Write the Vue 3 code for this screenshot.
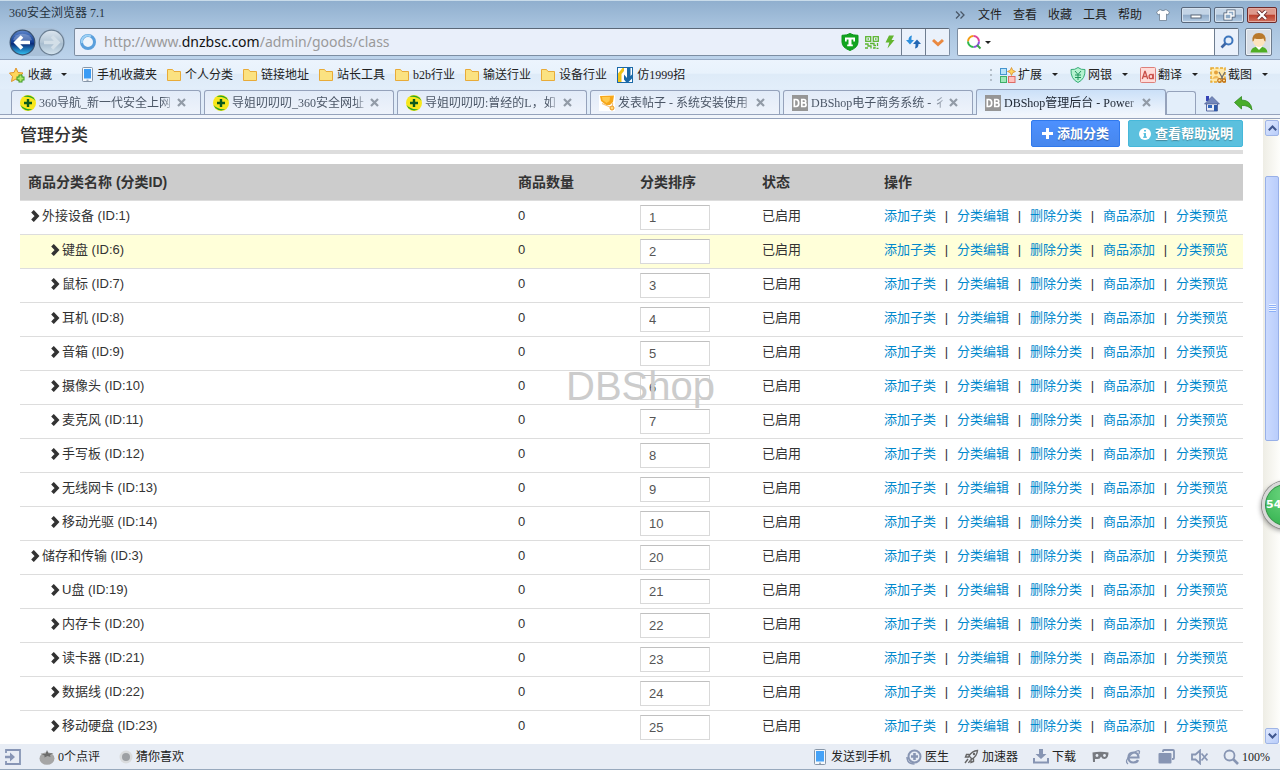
<script setup>
import { ref } from 'vue'

const menus = ['文件', '查看', '收藏', '工具', '帮助']
const folders = ['个人分类', '链接地址', '站长工具', 'b2b行业', '输送行业', '设备行业']
const tools = [
  { icon: 'ext', label: '扩展' },
  { icon: 'bank', label: '网银' },
  { icon: 'trans', label: '翻译' },
  { icon: 'shot', label: '截图' }
]
const tabs = [
  { icon: 'plus', title: '360导航_新一代安全上网' },
  { icon: 'plus', title: '导姐叨叨叨_360安全网址' },
  { icon: 'plus', title: '导姐叨叨叨:曾经的L，如' },
  { icon: 'medal', title: '发表帖子 - 系统安装使用' },
  { icon: 'db', title: 'DBShop电子商务系统 - 彳' },
  { icon: 'db', title: 'DBShop管理后台 - Power', active: true }
]
const rows = ref([
  { name: '外接设备', id: 1, sort: '1', top: true },
  { name: '键盘', id: 6, sort: '2', hot: true },
  { name: '鼠标', id: 7, sort: '3' },
  { name: '耳机', id: 8, sort: '4' },
  { name: '音箱', id: 9, sort: '5' },
  { name: '摄像头', id: 10, sort: '6' },
  { name: '麦克风', id: 11, sort: '7' },
  { name: '手写板', id: 12, sort: '8' },
  { name: '无线网卡', id: 13, sort: '9' },
  { name: '移动光驱', id: 14, sort: '10' },
  { name: '储存和传输', id: 3, sort: '20', top: true },
  { name: 'U盘', id: 19, sort: '21' },
  { name: '内存卡', id: 20, sort: '22' },
  { name: '读卡器', id: 21, sort: '23' },
  { name: '数据线', id: 22, sort: '24' },
  { name: '移动硬盘', id: 23, sort: '25' }
])
const actions = ['添加子类', '分类编辑', '删除分类', '商品添加', '分类预览']
const query = ref('')
</script>

<template>
  <div class="browser">
    <header class="frame">
      <div class="title-row">
        <span class="app-name">360安全浏览器 7.1</span>
        <nav class="menus">
          <button class="plain more" aria-label="更多">
            <svg width="10" height="8" viewBox="0 0 10 8"><path d="M1 0.5l3.5 3.5L1 7.5M5.5 0.5L9 4 5.5 7.5" fill="none" stroke="#4a5868" stroke-width="1.3" /></svg>
          </button>
          <button v-for="m in menus" :key="m" class="plain">{{ m }}</button>
          <button class="plain skin" aria-label="皮肤">
            <svg width="14" height="12" viewBox="0 0 14 12"><path d="M4 0.5Q7 3 10 0.5L13.5 3 12 6 10.5 5V11.5h-7V5L2 6 0.5 3Z" fill="#fff" stroke="#6d7f92" stroke-width="0.8" /></svg>
          </button>
        </nav>
        <div class="win-buttons">
          <button aria-label="最小化">
            <svg width="12" height="10" viewBox="0 0 12 10"><rect x="1" y="5" width="10" height="3" fill="#fff" stroke="#5d6878" /></svg>
          </button>
          <button aria-label="还原">
            <svg width="13" height="12" viewBox="0 0 13 12"><g fill="none" stroke="#4f5d70" stroke-width="3"><rect x="5" y="2" width="6" height="5" /><rect x="2" y="5" width="6" height="5" /></g><g fill="#8ca8c4" stroke="#fff" stroke-width="1.4"><rect x="5" y="2" width="6" height="5" /><rect x="2" y="5" width="6" height="5" /></g></svg>
          </button>
          <button class="close" aria-label="关闭">
            <svg width="12" height="10" viewBox="0 0 12 10"><path d="M2 1l8 8M10 1l-8 8" stroke="#6d2d2d" stroke-width="4" /><path d="M2 1l8 8M10 1l-8 8" stroke="#fff" stroke-width="2.3" /></svg>
          </button>
        </div>
      </div>

      <div class="address-row">
        <div class="history">
          <button class="plain" aria-label="后退">
            <svg width="27" height="27" viewBox="0 0 27 27">
              <defs><linearGradient id="back" x1="0" y1="0" x2="0" y2="1"><stop offset="0" stop-color="#5d86cc" /><stop offset=".48" stop-color="#123e94" /><stop offset=".55" stop-color="#0a2b78" /><stop offset="1" stop-color="#35c4f4" /></linearGradient></defs>
              <circle cx="13.5" cy="13.5" r="12.3" fill="url(#back)" stroke="#38516f" stroke-width="1.2" />
              <path d="M4 11a10 9 0 0 1 19 0Q13 14 4 11Z" fill="#fff" opacity=".25" />
              <path d="M13 7.500l-6 6 6 6M7.500 13.500h13.500" fill="none" stroke="#fff" stroke-width="3.6" />
            </svg>
          </button>
          <button class="plain" aria-label="前进">
            <svg width="27" height="27" viewBox="0 0 27 27">
              <defs><linearGradient id="fwd" x1="0" y1="0" x2="0" y2="1"><stop offset="0" stop-color="#dce6ef" /><stop offset=".48" stop-color="#b5c7d6" /><stop offset=".55" stop-color="#a8bdcf" /><stop offset="1" stop-color="#d5e5f0" /></linearGradient></defs>
              <circle cx="13.5" cy="13.5" r="12.3" fill="url(#fwd)" stroke="#6b7f93" stroke-width="1.2" />
              <path d="M14 7.500l6 6-6 6M19.500 13.500H6" fill="none" stroke="#d3dfe8" stroke-width="3.4" />
            </svg>
          </button>
        </div>

        <div class="address">
          <svg class="site" width="18" height="18" viewBox="0 0 18 18"><circle cx="9" cy="9" r="6.5" fill="#eef4fb" stroke="#5a9fdc" stroke-width="3" /><path d="M3 10a6 6 0 0 1 9-6.500" fill="none" stroke="#9fd2f5" stroke-width="2" /></svg>
          <a class="url" href="#">http://www.<b>dnzbsc.com</b>/admin/goods/class</a>
          <span class="marks">
            <svg width="18" height="18" viewBox="0 0 18 18"><path d="M9 0.5Q12 2.5 17 2.3V9Q17 14.5 9 17.5 1 14.5 1 9V2.3Q6 2.5 9 .5Z" fill="#11a51f" stroke="#0a9518" /><path d="M4 4.500h10v4h-1.700V6.500H10.500V11.500h1.300v1.800H6.200V11.500h1.300V6.500H5.700V8.500H4Z" fill="#fff" /></svg>
            <svg width="14" height="13" viewBox="0 0 14 13"><g fill="none" stroke="#5cb531" stroke-width="1.3"><rect x=".7" y=".7" width="5" height="4.600" /><rect x="8.300" y=".7" width="5" height="4.600" /><path d="M0 8h3v2h3v2.500M0 12h3M5 7.500h4v2h2M8 12h2v-1M12.500 7v3M11.500 12.300h2M2.500 3h1.500M10 3h1.500" /></g></svg>
            <svg width="10" height="14" viewBox="0 0 10 14"><path d="M4 0.500h5L6.500 5H9.500L2.500 13.500 4.300 7.500H0.500Z" fill="#62b52f" /></svg>
          </span>
          <button class="cell" aria-label="刷新">
            <svg width="15" height="14" viewBox="0 0 15 14"><path d="M6 0.500Q2.500 1 2.500 5H0L4 9.500 8 5H5.500Q5.300 2.500 6 .5Z" fill="#2d8fdd" /><path d="M9 13.500Q12.500 13 12.500 9H15L11 4.500 7 9H9.500Q9.700 11.500 9 13.500Z" fill="#2368b4" /></svg>
          </button>
          <button class="cell" aria-label="展开">
            <svg width="12" height="9" viewBox="0 0 12 9"><path d="M1 2l5 4.500L11 2" fill="none" stroke="#ea8940" stroke-width="3" /></svg>
          </button>
        </div>

        <div class="search">
          <svg width="16" height="16" viewBox="0 0 16 16"><g fill="none" stroke-width="2"><path d="M2 7.500A5.500 5.500 0 0 1 7.500 2" stroke="#f39c12" /><path d="M7.500 2A5.500 5.500 0 0 1 13 7.500" stroke="#e0449a" /><path d="M13 7.500A5.500 5.500 0 0 1 7.500 13" stroke="#8f4de0" /><path d="M7.500 13A5.500 5.500 0 0 1 2 7.500" stroke="#2fb84c" /><path d="M11 11l3.500 3.500" stroke="#3ba84a" /></g></svg>
          <i class="caret"></i>
          <input v-model="query" type="text" aria-label="搜索" />
          <button class="cell" aria-label="搜索">
            <svg width="14" height="14" viewBox="0 0 14 14"><circle cx="8.500" cy="5.500" r="4" fill="#e6effb" stroke="#3d76bd" stroke-width="2" /><path d="M5.500 8.500L1.500 12.500" stroke="#3d66a5" stroke-width="2.600" /></svg>
          </button>
        </div>
        <button class="avatar" aria-label="用户">
          <svg width="20" height="21" viewBox="0 0 20 21"><path d="M1.500 20.500Q2 14.500 10 14.500t8.500 6Z" fill="#4fae25" /><path d="M7 15l3 3 3-3v-2H7Z" fill="#fff" /><ellipse cx="10" cy="8.500" rx="6" ry="6.500" fill="#fde3bd" /><path d="M3.500 9.500Q2.500 1 10 1t6.500 8.500Q15 9 14.500 6.500 10 7.500 5.500 6.500 5 9 3.500 9.500Z" fill="#b9782a" /></svg>
        </button>
      </div>
    </header>

    <div class="bookmarks">
      <div class="marks-left">
        <button class="plain fav">
          <svg width="16" height="16" viewBox="0 0 16 16"><path d="M7 1l2 4.500 5 .5-3.500 3.500 1 5L7 12l-4.500 2.500 1-5L.5 6l4.500-.5Z" fill="#ffd75a" stroke="#e0952c" /><path d="M11.500 7.500v8M7.500 11.500h8" stroke="#3d9b22" stroke-width="4" /><path d="M11.500 8.500v6M8.500 11.500h6" stroke="#b0e86e" stroke-width="2" /></svg>
          <span>收藏</span><i class="caret"></i>
        </button>
        <a href="#" class="mark">
          <svg width="11" height="15" viewBox="0 0 11 15"><rect x=".5" y=".5" width="10" height="14" rx="1" fill="#f5f8fb" stroke="#8796a8" /><rect x="2" y="2" width="7" height="9.500" fill="#3b9cf5" /><path d="M4.500 13.200h2" stroke="#7d8da0" /></svg>手机收藏夹
        </a>
        <a v-for="f in folders" :key="f" href="#" class="mark">
          <svg width="14" height="12" viewBox="0 0 14 12"><path d="M.5 11.500V.5h5l1.500 2h6.500v9Z" fill="#fbe281" stroke="#e8ab38" /></svg>{{ f }}
        </a>
        <a href="#" class="mark">
          <svg width="16" height="16" viewBox="0 0 16 16"><rect x=".5" y=".5" width="15" height="15" fill="#fff" stroke="#1a69a8" /><path d="M1 6.500L5.500 1H7v3L4.500 7v8H1Z" fill="#f0c419" /><path d="M7 7.500l3 3.500V1h3.500v8L15 7.500v4L11.500 15H9L7 12.500Z" fill="#1a69a8" /></svg>仿1999招
        </a>
      </div>
      <div class="tools">
        <i class="dots"></i>
        <button v-for="t in tools" :key="t.icon" class="plain tool">
          <svg width="16" height="16" viewBox="0 0 16 16">
            <g v-if="t.icon === 'ext'"><rect x=".5" y="1.500" width="6" height="6" fill="#b9e4fb" stroke="#4495cf" /><rect x=".5" y="9.500" width="6" height="6" fill="#9ee9b9" stroke="#3fae68" /><rect x="8.500" y="9.500" width="6.500" height="6" fill="#ffc1bd" stroke="#dd6b65" /><path d="M11.500 .5l1.200 2.800 2.800 1.200-2.800 1.200-1.200 2.800-1.200-2.800-2.800-1.200 2.800-1.200Z" fill="#ffd45c" stroke="#d98f2d" stroke-width=".8" /></g>
            <g v-else-if="t.icon === 'bank'"><path d="M8 .5Q11 3 15 2.500 15.500 12 8 15.500.5 12 1 2.500 5 3 8 .5Z" fill="#b5f2d0" stroke="#38ae78" /><path d="M5 4l3 3.500L11 4M8 7.500V13M5 8h6M5 10.500h6" fill="none" stroke="#1f945c" /></g>
            <g v-else-if="t.icon === 'trans'"><rect x=".5" y=".5" width="15" height="15" rx="1" fill="#ffdcd9" stroke="#dd807b" /><path d="M2.300 12L4.800 4.500h.4L7.700 12M3.200 9.500h3.600" fill="none" stroke="#c9504a" stroke-width="1.300" /><ellipse cx="11" cy="9.500" rx="1.900" ry="2.200" fill="none" stroke="#c9504a" stroke-width="1.300" /><path d="M13.200 6.800V12.300" stroke="#c9504a" stroke-width="1.300" /></g>
            <g v-else><rect x="1" y="1" width="14" height="14" fill="#ffe9a8" stroke="#e8a92f" stroke-width="1.500" stroke-dasharray="3 1.500" /><circle cx="6" cy="5.500" r="2" fill="#e6a23c" /><path d="M2 12q4-6 7-1" fill="#efb95c" /><path d="M9 5l4 7M15 5l-4 7" stroke="#707070" stroke-width="1.300" /><circle cx="9.500" cy="13.500" r="1.800" fill="none" stroke="#bd6e1a" stroke-width="1.200" /><circle cx="14" cy="13.500" r="1.600" fill="none" stroke="#bd6e1a" stroke-width="1.200" /></g>
          </svg>
          <span>{{ t.label }}</span><i class="caret"></i>
        </button>
      </div>
    </div>

    <div class="tabs">
      <div v-for="t in tabs" :key="t.title" class="tab" :class="{ active: t.active }">
        <svg width="16" height="16" viewBox="0 0 16 16">
          <g v-if="t.icon === 'plus'"><circle cx="8" cy="8" r="8" fill="#f8e71c" /><path d="M3.500 2A8 8 0 0 1 15.500 6Q11 1 3.500 2ZM12.500 14A8 8 0 0 1 .5 10Q5 15 12.500 14Z" fill="#23a428" /><path d="M8 4v8M4 8h8" stroke="#0b5a1c" stroke-width="2.400" /></g>
          <g v-else-if="t.icon === 'medal'"><rect width="16" height="16" fill="#fff" /><path d="M1 1l14-.5L14 7l-3 3H7L2 6Z" fill="#f7a81b" /><path d="M3 2h8l-.5 4-3 2L3.500 5Z" fill="#ffc94d" /><path d="M3 8.500l8 3.500M13.500 8v3" stroke="#f3c27c" stroke-width="1.200" /><circle cx="13" cy="13" r="2" fill="#ffd97a" stroke="#ec9620" /></g>
          <g v-else><rect width="16" height="16" fill="#969696" /><path d="M2.300 4.500h1.700a2.700 3.500 0 0 1 0 7H2.300ZM9.800 4.500h2.200a1.700 1.700 0 0 1 0 3.400H9.800ZM9.800 8h2.500a1.700 1.700 0 0 1 0 3.500H9.800Z" fill="none" stroke="#fff" stroke-width="1.700" /></g>
        </svg>
        <span class="tab-title">{{ t.title }}</span>
        <button class="plain" aria-label="关闭标签">
          <svg width="9" height="9" viewBox="0 0 9 9"><path d="M1 1l7 7M8 1L1 8" stroke="#929ba7" stroke-width="2.200" /></svg>
        </button>
      </div>
      <button class="new-tab" aria-label="新标签"></button>
      <button class="plain home" aria-label="主页">
        <svg width="16" height="17" viewBox="0 0 16 17"><path d="M2 1h3v5H2Z" fill="#3543b5" /><path d="M2.500 8.500h11V16h-11Z" fill="#e9edf6" stroke="#5a6ca4" /><path d="M8 1.500L.5 9h15Z" fill="#7488bb" stroke="#43558b" stroke-width=".6" /><rect x="4" y="10" width="4" height="3" fill="#3266bb" /><rect x="10" y="10" width="3" height="6" fill="#2d59a8" /></svg>
      </button>
      <button class="plain" aria-label="恢复">
        <svg width="19" height="15" viewBox="0 0 19 15"><path d="M0.500 6.500L7.500 .5V4Q17 4 18 14 14.500 9 7.500 9.500V13Z" fill="#49ad2b" stroke="#31891e" stroke-width=".8" /></svg>
      </button>
    </div>
    <div class="strip"></div>

    <div class="viewport">
      <main class="page">
        <div class="page-head">
          <h1>管理分类</h1>
          <div class="page-buttons">
            <button class="btn add"><svg width="11" height="11" viewBox="0 0 11 11"><path d="M5.500 0v11M0 5.500h11" stroke="#fff" stroke-width="3" /></svg>添加分类</button>
            <button class="btn help"><svg width="12" height="12" viewBox="0 0 12 12"><circle cx="6" cy="6" r="6" fill="#fff" /><path d="M5 2h2v1.500H5ZM4.500 5H7v3.500h.8V10H4.200V8.500H5V6.300h-.5Z" fill="#5bc0de" /></svg>查看帮助说明</button>
          </div>
        </div>

        <table>
          <colgroup><col /><col class="c" /><col class="c" /><col class="c" /><col class="c-actions" /></colgroup>
          <thead>
            <tr><th>商品分类名称 (分类ID)</th><th>商品数量</th><th>分类排序</th><th>状态</th><th>操作</th></tr>
          </thead>
          <tbody>
            <tr v-for="r in rows" :key="r.id" :class="{ hot: r.hot }">
              <td>
                <div class="name" :class="{ child: !r.top }">
                  <svg width="14" height="12" viewBox="0 0 14 12"><path d="M4.500 1.200L9 6 4.500 10.800" fill="none" stroke="#333" stroke-width="3.600" /></svg>{{ r.name }} (ID:{{ r.id }})
                </div>
              </td>
              <td>0</td>
              <td><input v-model="r.sort" type="text" :aria-label="r.name + '排序'" /></td>
              <td>已启用</td>
              <td>
                <div class="actions">
                  <template v-for="(a, i) in actions" :key="a"><span v-if="i" class="sep">|</span><a href="#">{{ a }}</a></template>
                </div>
              </td>
            </tr>
          </tbody>
        </table>
        <div class="watermark">DBShop</div>
      </main>

      <div class="scrollbar">
        <button aria-label="向上滚动"><svg width="9" height="6" viewBox="0 0 9 6"><path d="M.8 5.200l3.700-3.700 3.700 3.700" fill="none" stroke="#40578f" stroke-width="2" /></svg></button>
        <div class="track"><div class="thumb"><i></i></div></div>
        <button aria-label="向下滚动"><svg width="9" height="6" viewBox="0 0 9 6"><path d="M.8 .8l3.700 3.700L8.200 .8" fill="none" stroke="#40578f" stroke-width="2" /></svg></button>
      </div>
      <div class="speed-ball">54</div>
    </div>

    <footer class="status">
      <button class="plain panel" aria-label="侧栏">
        <svg width="16" height="16" viewBox="0 0 16 16"><path d="M1 4V1h14v14H1v-3" fill="none" stroke="#8795b5" stroke-width="1.800" /><path d="M0 6.700h5V3.500L10 8l-5 4.500V9.300H0Z" fill="#8795b5" /></svg>
      </button>
      <button class="plain item"><svg width="16" height="16" viewBox="0 0 16 16"><ellipse cx="8" cy="9.500" rx="7.500" ry="6.300" fill="#a6a6a6" /><path d="M1.500 4.500l5 .5 1.500-4 1.500 3.500 5-.5-3.500 2 .5 2-3-1-3 1.500V6.500Z" fill="#6c6c6c" /></svg>0个点评</button>
      <button class="plain item guess"><svg width="14" height="14" viewBox="0 0 14 14"><circle cx="7" cy="7" r="6.500" fill="#d9dbdd" /><circle cx="7" cy="7" r="4" fill="#9da0a4" /></svg>猜你喜欢</button>
      <div class="status-right">
        <button class="plain item send"><svg width="12" height="16" viewBox="0 0 12 16"><rect x=".5" y=".5" width="11" height="15" rx="1" fill="#f5f8fb" stroke="#8796a8" /><rect x="2" y="2" width="8" height="10.500" fill="#45a2f7" /><path d="M5 14.200h2" stroke="#7d8da0" /></svg>发送到手机</button>
        <button class="plain item"><svg width="16" height="16" viewBox="0 0 16 16"><circle cx="8.500" cy="7.500" r="6" fill="none" stroke="#8795b3" stroke-width="2" /><path d="M8.500 4v7M5 7.500h7" stroke="#8795b3" stroke-width="2.600" /><path d="M1 8Q1 15 8.500 15" fill="none" stroke="#8795b3" stroke-width="1.500" /></svg>医生</button>
        <button class="plain item"><svg width="15" height="15" viewBox="0 0 15 15"><path d="M13.500 1.500Q8 2 5 7L8 10Q13 7 13.500 1.500ZM5.500 5.500H2.500L1.500 8H5M9.500 9.500v3L7 13.500V10M4 10L1 14M6 11.500L4.500 14" fill="none" stroke="#666" stroke-width="1.400" /><circle cx="10" cy="5" r="1.200" fill="#666" /></svg>加速器</button>
        <button class="plain item"><svg width="16" height="15" viewBox="0 0 16 15"><path d="M6 0h4v5h3.500L8 10 2.500 5H6Z" fill="#8795b3" /><path d="M1 9v4.500h14V9" fill="none" stroke="#8795b3" stroke-width="2" /></svg>下载</button>
        <button class="plain glyph" aria-label="无痕"><svg width="17" height="12" viewBox="0 0 17 12"><path d="M.5 1.500Q8 0 16.500 1.500 16.500 8 12.500 8 10 8 9 5.500 8 8.500 5 8H3v3H1Z" fill="#777a80" /><circle cx="5" cy="4.500" r="1.400" fill="#e8edf5" /><circle cx="12.500" cy="4.500" r="1.400" fill="#e8edf5" /></svg></button>
        <button class="plain glyph" aria-label="兼容模式"><svg width="16" height="16" viewBox="0 0 16 16"><path d="M3.500 8.500H13.500Q13.500 3.500 8.500 3.500T3.500 8.500Q3.500 13.500 8.500 13.500 12 13.500 13 11" fill="none" stroke="#8795b3" stroke-width="2.200" /><path d="M3 15Q-1 12 6 5.500 13.500 0 14.500 2.500L14 5" fill="none" stroke="#8795b3" stroke-width="1.300" /></svg></button>
        <button class="plain glyph" aria-label="窗口"><svg width="17" height="15" viewBox="0 0 17 15"><path d="M5 3V2Q5 1 6 1h9q1 0 1 1v7q0 1-1 1h-1" fill="none" stroke="#8795b3" stroke-width="1.800" /><rect x=".5" y="4" width="13" height="10.500" rx="1" fill="#8795b3" /></svg></button>
        <button class="plain glyph" aria-label="静音"><svg width="17" height="16" viewBox="0 0 17 16"><path d="M1 5.500h3.500L9 1.500v13L4.500 10.500H1Z" fill="none" stroke="#8795b3" stroke-width="1.800" /><path d="M10.500 4.500l6 7M16.500 4.500l-6 7" stroke="#8795b3" stroke-width="1.700" /></svg></button>
        <button class="plain item zoom"><svg width="16" height="16" viewBox="0 0 16 16"><circle cx="6.500" cy="6.500" r="5" fill="none" stroke="#8795b3" stroke-width="1.800" /><path d="M10 10l5 5" stroke="#8795b3" stroke-width="2.600" /></svg>100%</button>
      </div>
    </footer>
  </div>
</template>

<style>
html,
body {
  margin: 0;
  overflow: hidden;
}
</style>

<style scoped>
.browser {
  display: flex;
  flex-direction: column;
  height: 100vh;
  box-sizing: border-box;
  border-bottom: 1px solid #98a9bd;
  background: #e8f0fa;
  color: #222;
  font: 12px/16px "Liberation Serif", "Noto Sans CJK SC", serif;
}
.browser *,
.browser *::before {
  box-sizing: border-box;
}
svg {
  display: block;
  flex: none;
}
button,
input {
  font: inherit;
  color: inherit;
  border-radius: 0;
}
button {
  display: flex;
  align-items: center;
  justify-content: center;
  padding: 0;
  border: 0;
}
.plain {
  background: none;
  white-space: nowrap;
}
.caret {
  flex: none;
  border: 3px solid transparent;
  border-top-color: #222;
  border-bottom: 0;
}

/* window frame */
.frame {
  flex: none;
  border-top: 1px solid #c9dcea;
  border-bottom: 1px solid #95a9c4;
  background: linear-gradient(#90afce, #a9c4df 45%, #bcd3eb);
}
.title-row {
  display: flex;
  align-items: center;
  height: 27px;
  padding: 0 3px 0 9px;
}
.app-name {
  flex: 1;
  padding-bottom: 4px;
  color: #26333f;
}
.menus {
  display: flex;
  align-items: center;
  gap: 11px;
  margin-right: 11px;
}
.menus .more {
  margin-right: 2px;
}
.menus .skin {
  margin-left: 3px;
}
.win-buttons {
  display: flex;
  gap: 3px;
}
.win-buttons button {
  width: 30px;
  height: 16px;
  border: 1px solid #59687c;
  border-radius: 2px;
  background: linear-gradient(#c3d4e6 45%, #90abc8 50%, #b3cbe3);
  box-shadow: inset 0 0 0 1px #d5e2ef;
}
.win-buttons .close {
  border-color: #6e2b2b;
  background: linear-gradient(#dd9a8d 45%, #bb3f2c 50%, #d0705d);
  box-shadow: inset 0 0 0 1px #e5aba0;
}
.address-row {
  display: flex;
  height: 31px;
  padding: 0 8px 3px 9px;
}
.history {
  display: flex;
  gap: 2px;
  margin-right: 9px;
  border-radius: 14px;
  background: #a9c0d8;
}
.address,
.search {
  display: flex;
  align-items: center;
  border: 1px solid #7c8da2;
  border-top-color: #5b6878;
  border-radius: 2px;
}
.address {
  flex: 1;
  background: #e9effa;
}
.site {
  margin: 0 7px 0 4px;
}
.url {
  flex: 1;
  color: #9a9a9a;
  font: 14px/20px "Noto Sans", sans-serif;
  text-decoration: none;
}
.url b {
  color: #111;
  font-weight: 400;
}
.marks {
  display: flex;
  align-items: center;
  gap: 6px;
  padding-right: 6px;
}
.cell {
  align-self: stretch;
  width: 24px;
  border-left: 1px solid #6e7d90;
  background: #eaf1fb;
}
.search {
  width: 282px;
  margin: 0 6px 0 7px;
  padding-left: 8px;
  background: #fff;
}
.search .caret {
  margin-left: 3px;
}
.search input {
  flex: 1;
  min-width: 0;
  height: 24px;
  padding: 0 6px;
  border: 0;
  outline: 0;
  background: none;
}
.avatar {
  width: 27px;
  border: 1px solid #6d7c8e;
  border-radius: 2px;
  background: #d8dee6;
  box-shadow: inset 0 0 0 1px #eef2f6;
}

/* bookmark bar */
.bookmarks {
  display: flex;
  flex: none;
  justify-content: space-between;
  height: 29px;
  padding-left: 9px;
  background: linear-gradient(#ecf4fd, #e8f2fc 45%, #deebf8 50%, #e2eefa);
}
.marks-left,
.tools,
.mark,
.fav {
  display: flex;
  align-items: center;
}
.fav {
  margin-right: 15px;
}
.fav span {
  margin: 0 9px 0 3px;
}
.mark {
  gap: 4px;
  margin-right: 10px;
  color: #222;
  text-decoration: none;
  white-space: nowrap;
}
.dots {
  width: 2px;
  height: 12px;
  margin-right: 8px;
  background: repeating-linear-gradient(#b4bfca 0 2px, transparent 2px 5px);
}
.tool {
  width: 70px;
  justify-content: flex-start;
}
.tool span {
  margin: 0 10px 0 2px;
}

/* tabs */
.tabs {
  display: flex;
  flex: none;
  align-items: flex-end;
  height: 26px;
  padding-left: 11px;
  border-bottom: 1px solid #95a2bb;
  background: #e0ecf9;
}
.tab {
  display: flex;
  flex: 0 1 190px;
  align-items: center;
  min-width: 0;
  height: 24px;
  margin-right: 3px;
  padding: 0 14px 0 8px;
  border: 1px solid #95a2bb;
  border-bottom: 0;
  border-radius: 3px 3px 0 0;
  background: linear-gradient(#e2ebf8, #eef3fb);
  color: #4b5666;
}
.tab.active {
  height: 26px;
  margin: 0 0 -1px;
  background: linear-gradient(#cbe0f8, #f1f6fd);
  color: #1c2430;
}
.tab-title {
  flex: 1;
  margin: 0 2px 0 3px;
  overflow: hidden;
  white-space: nowrap;
  mask-image: linear-gradient(90deg, #000 90%, transparent);
}
.new-tab {
  width: 30px;
  height: 23px;
  border: 1px solid #95a2bb;
  border-bottom: 0;
  border-radius: 3px 3px 0 0;
  background: #e3eefa;
}
.home {
  margin: 0 14px 0 8px;
}
.tabs > .plain {
  height: 22px;
}
.strip {
  flex: none;
  height: 4px;
  border-bottom: 1px solid #95a2bb;
  background: #f1f5fb;
}

/* page */
.viewport {
  position: relative;
  display: flex;
  flex: 1;
  min-height: 0;
  overflow: hidden;
  background: #fff;
}
.page {
  position: relative;
  flex: 1;
  padding: 1px 20px 0;
  color: #333;
  font: 13px/20px "Liberation Sans", "Noto Sans CJK SC", sans-serif;
}
.page-head {
  display: flex;
  justify-content: space-between;
  height: 34px;
  margin-bottom: 10px;
  border-bottom: 4px solid #ddd;
}
h1 {
  margin: 0;
  font-size: 17px;
  font-weight: 500;
  line-height: 32px;
}
.page-buttons {
  display: flex;
  align-items: flex-start;
  gap: 8px;
}
.btn {
  gap: 4px;
  height: 27px;
  padding: 0 10px;
  border: 1px solid #3079ed;
  border-radius: 2px;
  color: #fff;
  font-weight: 700;
  text-shadow: 0 1px 1px rgba(0, 0, 0, 0.3);
}
.add {
  background: linear-gradient(#4d90fe, #4787ed);
}
.help {
  padding: 0 9px 0 10px;
  border-color: #46b8da;
  background: #5bc0de;
}
table {
  width: 100%;
  table-layout: fixed;
  border-collapse: separate;
  border-spacing: 0;
}
.c {
  width: 122px;
}
.c-actions {
  width: 367px;
}
th {
  height: 36px;
  padding: 0 8px;
  background: #ccc;
  font-size: 14px;
  text-align: left;
}
td {
  height: 34px;
  padding: 4px 8px;
  border-top: 1px solid #ddd;
  line-height: 22px;
  vertical-align: top;
  white-space: nowrap;
}
.hot td {
  background: #ffffd9;
}
.name {
  display: flex;
  align-items: center;
}
.child {
  padding-left: 20px;
}
td input {
  display: block;
  width: 70px;
  height: 25px;
  padding: 0 8px;
  border: 1px solid #d9d9d9;
  border-top-color: #c0c0c0;
  outline: 0;
  background: #fff;
  color: #555;
}
.actions {
  display: flex;
}
.actions a {
  color: #0088cc;
  text-decoration: none;
}
.sep {
  width: 21px;
  text-align: center;
}
.watermark {
  position: absolute;
  top: 244px;
  left: 0;
  right: 0;
  padding-left: 18px;
  color: #ccc;
  font-size: 40px;
  line-height: 46px;
  text-align: center;
  pointer-events: none;
}

/* scrollbar */
.scrollbar {
  display: flex;
  flex: none;
  flex-direction: column;
  width: 17px;
  padding: 1px 1px 0 2px;
  background: linear-gradient(90deg, #eeede5, #fefefb);
}
.scrollbar button {
  flex: none;
  height: 16px;
  border: 1px solid #9fb5e6;
  border-radius: 2px;
  background: linear-gradient(135deg, #dfe8fe, #b9cdfa);
}
.track {
  flex: 1;
  padding-top: 40px;
}
.thumb {
  display: flex;
  align-items: center;
  justify-content: center;
  height: 48%;
  border: 1px solid #98b0e8;
  border-radius: 2px;
  background: linear-gradient(90deg, #cbdafe, #b9cdfb);
}
.thumb i {
  width: 7px;
  height: 8px;
  background: repeating-linear-gradient(#eef4fe 0 1px, #8cb0f8 1px 2px);
}
.speed-ball {
  position: absolute;
  top: 362px;
  right: -30px;
  width: 48px;
  height: 48px;
  padding-left: 1px;
  border: 3px solid #d8d8d8;
  border-radius: 50%;
  background: radial-gradient(circle at 50% 25%, #6cd67f, #2fae4b);
  box-shadow: 0 0 0 1px #8e8e8e, -1px 2px 5px rgba(0, 0, 0, 0.4), inset 0 0 0 1px #3a8f4b;
  color: #fff;
  font: 700 11px/42px "DejaVu Sans", sans-serif;
}

/* status bar */
.status {
  display: flex;
  flex: none;
  align-items: center;
  height: 25px;
  padding: 0 10px 0 5px;
  background: #e8edf5;
}
.panel {
  margin-right: 18px;
}
.item {
  gap: 3px;
}
.guess {
  margin-left: 19px;
}
.status-right {
  display: flex;
  align-items: center;
  gap: 15px;
  margin-left: auto;
}
.send {
  gap: 5px;
}
.glyph {
  width: 18px;
}
</style>
